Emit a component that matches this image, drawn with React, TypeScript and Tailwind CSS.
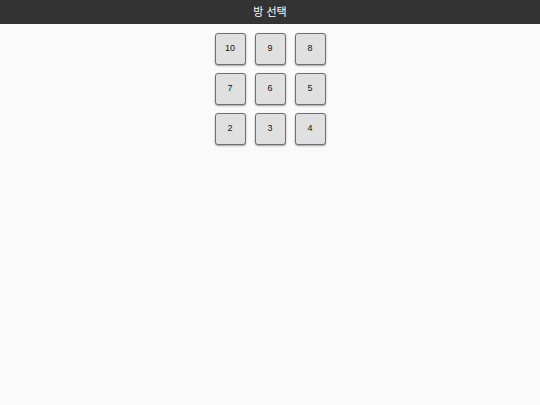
import React from "react";

const rows = [
  ["10", "9", "8"],
  ["7", "6", "5"],
  ["2", "3", "4"],
];

export default function App() {
  return (
    <div
      className="min-h-[405px] w-full bg-[#fafafa]"
      style={{ fontFamily: '"Liberation Sans", Arial, "Noto Sans CJK KR", sans-serif' }}
    >
      <div className="flex h-[24px] items-center justify-center bg-[#333333] text-[11px] text-white">
        방 선택
      </div>
      <div className="flex justify-center pt-[9px]">
        <div className="grid grid-cols-3 gap-x-[9px] gap-y-[8px]">
          {rows.flat().map((n) => (
            <button
              key={n}
              className="flex h-[32px] w-[31px] items-center justify-center rounded-[3px] border border-[#6e6e6e] bg-[#e0e0e0] text-[9px] text-[#111] shadow-[0_1px_2px_rgba(0,0,0,0.35)]"
            >
              {n}
            </button>
          ))}
        </div>
      </div>
    </div>
  );
}
